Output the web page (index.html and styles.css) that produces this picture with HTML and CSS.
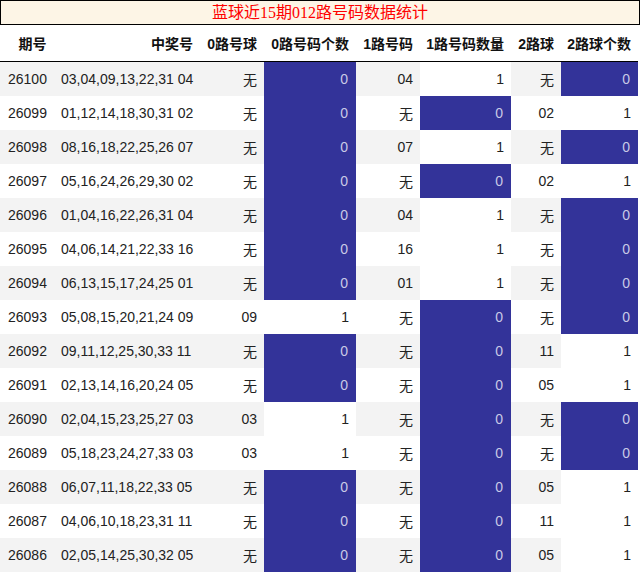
FILE: index.html
```html
<!DOCTYPE html>
<html lang="zh">
<head>
<meta charset="utf-8">
<title>蓝球近15期012路号码数据统计</title>
<link rel="stylesheet" href="styles.css">
</head>
<body>
<div class="title">蓝球近15期012路号码数据统计</div>
<table class="stats">
<colgroup>
<col class="c1"><col class="c2"><col class="c3"><col class="c4"><col class="c5"><col class="c6"><col class="c7"><col class="c8">
</colgroup>
<thead>
<tr><th>期号</th><th>中奖号</th><th>0路号球</th><th>0路号码个数</th><th>1路号码</th><th>1路号码数量</th><th>2路球</th><th>2路球个数</th></tr>
</thead>
<tbody>
<tr class="odd"><td>26100</td><td>03,04,09,13,22,31 04</td><td>无</td><td class="z">0</td><td>04</td><td class="w">1</td><td>无</td><td class="z">0</td></tr>
<tr><td>26099</td><td>01,12,14,18,30,31 02</td><td>无</td><td class="z">0</td><td>无</td><td class="z">0</td><td>02</td><td class="w">1</td></tr>
<tr class="odd"><td>26098</td><td>08,16,18,22,25,26 07</td><td>无</td><td class="z">0</td><td>07</td><td class="w">1</td><td>无</td><td class="z">0</td></tr>
<tr><td>26097</td><td>05,16,24,26,29,30 02</td><td>无</td><td class="z">0</td><td>无</td><td class="z">0</td><td>02</td><td class="w">1</td></tr>
<tr class="odd"><td>26096</td><td>01,04,16,22,26,31 04</td><td>无</td><td class="z">0</td><td>04</td><td class="w">1</td><td>无</td><td class="z">0</td></tr>
<tr><td>26095</td><td>04,06,14,21,22,33 16</td><td>无</td><td class="z">0</td><td>16</td><td class="w">1</td><td>无</td><td class="z">0</td></tr>
<tr class="odd"><td>26094</td><td>06,13,15,17,24,25 01</td><td>无</td><td class="z">0</td><td>01</td><td class="w">1</td><td>无</td><td class="z">0</td></tr>
<tr><td>26093</td><td>05,08,15,20,21,24 09</td><td>09</td><td class="w">1</td><td>无</td><td class="z">0</td><td>无</td><td class="z">0</td></tr>
<tr class="odd"><td>26092</td><td>09,11,12,25,30,33 11</td><td>无</td><td class="z">0</td><td>无</td><td class="z">0</td><td>11</td><td class="w">1</td></tr>
<tr><td>26091</td><td>02,13,14,16,20,24 05</td><td>无</td><td class="z">0</td><td>无</td><td class="z">0</td><td>05</td><td class="w">1</td></tr>
<tr class="odd"><td>26090</td><td>02,04,15,23,25,27 03</td><td>03</td><td class="w">1</td><td>无</td><td class="z">0</td><td>无</td><td class="z">0</td></tr>
<tr><td>26089</td><td>05,18,23,24,27,33 03</td><td>03</td><td class="w">1</td><td>无</td><td class="z">0</td><td>无</td><td class="z">0</td></tr>
<tr class="odd"><td>26088</td><td>06,07,11,18,22,33 05</td><td>无</td><td class="z">0</td><td>无</td><td class="z">0</td><td>05</td><td class="w">1</td></tr>
<tr><td>26087</td><td>04,06,10,18,23,31 11</td><td>无</td><td class="z">0</td><td>无</td><td class="z">0</td><td>11</td><td class="w">1</td></tr>
<tr class="odd"><td>26086</td><td>02,05,14,25,30,32 05</td><td>无</td><td class="z">0</td><td>无</td><td class="z">0</td><td>05</td><td class="w">1</td></tr>
</tbody>
</table>
</body>
</html>
```
FILE: styles.css
```css
html, body {
  margin: 0;
  padding: 0;
  background: #fff;
}
body {
  font-family: "Liberation Sans", "Noto Sans CJK SC", sans-serif;
  font-size: 14px;
  color: #222;
}
.title {
  box-sizing: border-box;
  width: 640px;
  height: 25px;
  border: 1px solid #000;
  background: #fdf5e6;
  color: #f00;
  font-family: "Liberation Serif", "Noto Sans CJK SC", serif;
  font-size: 16px;
  line-height: 23px;
  text-align: center;
}
.stats {
  width: 638px;
  border-collapse: collapse;
  table-layout: fixed;
}
.c1 { width: 54px; }
.c2 { width: 146px; }
.c3 { width: 64px; }
.c4 { width: 92px; }
.c5 { width: 64px; }
.c6 { width: 91px; }
.c7 { width: 50px; }
.c8 { width: 77px; }
.stats th {
  height: 36px;
  padding: 0 7px 0 0;
  text-align: right;
  font-weight: bold;
  font-size: 14px;
  color: #111;
  border-bottom: 1px solid #000;
  white-space: nowrap;
}
.stats th:first-child {
  text-align: center;
  padding-left: 11px;
  padding-right: 0;
}
.stats td {
  height: 34px;
  padding: 0 7px 0 0;
  text-align: right;
  white-space: nowrap;
}
.stats td:first-child {
  text-align: left;
  padding-left: 8px;
}
.stats td:nth-child(2) {
  text-align: left;
  padding-left: 7px;
}
.stats tr.odd td {
  background: #f3f3f3;
}
.stats tr td.z {
  background: #333399;
  color: #c9c9e6;
  padding-right: 8px;
}
.stats tr td.w {
  background: #fff;
}
```
